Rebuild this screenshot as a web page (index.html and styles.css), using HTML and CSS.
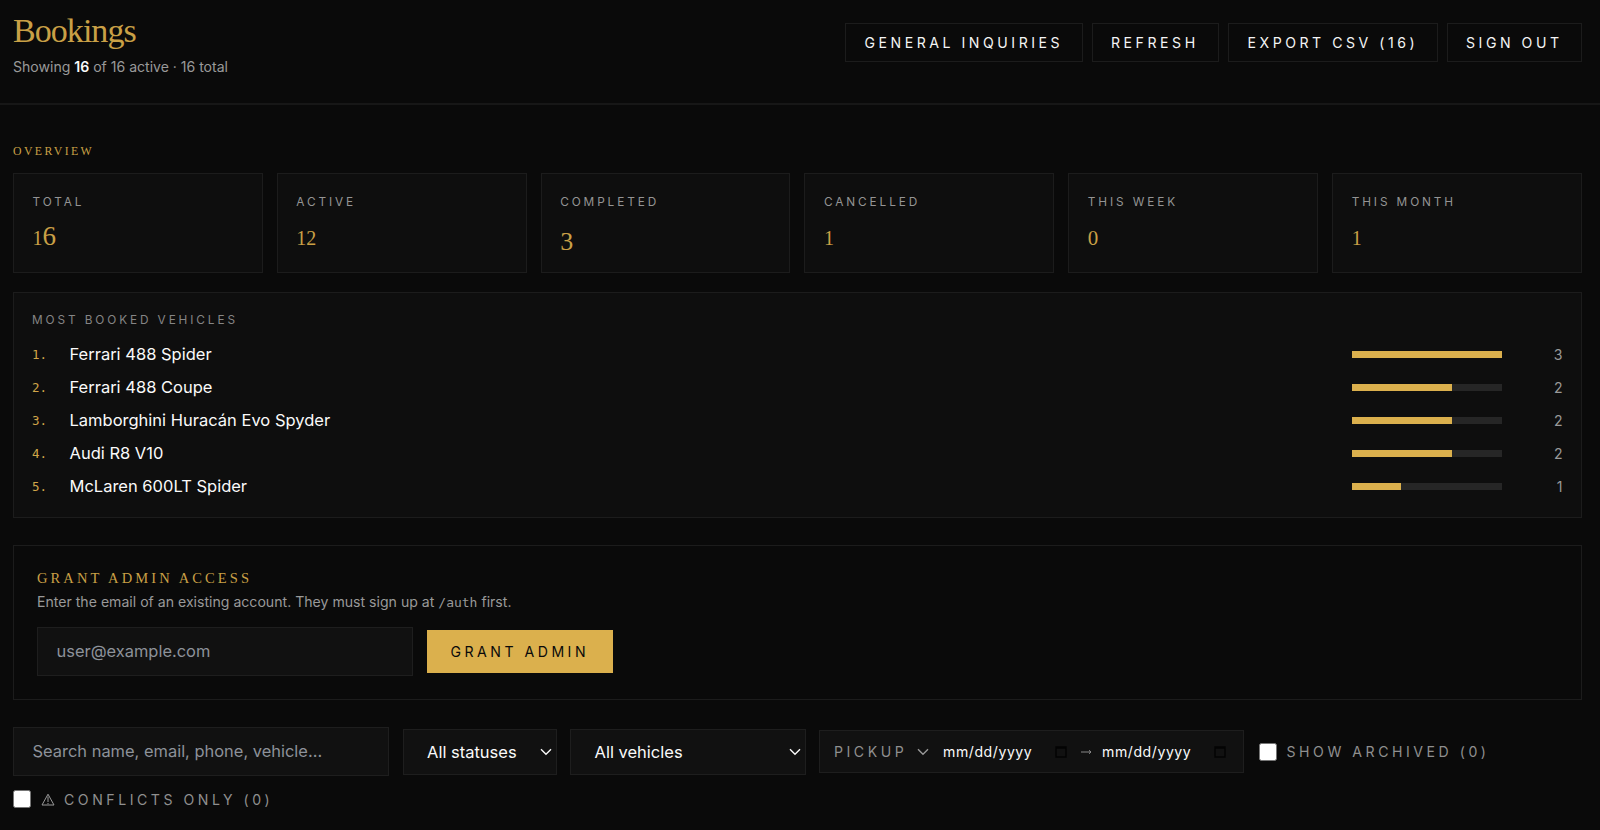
FILE: index.html
```html
<!DOCTYPE html>
<html lang="en">
<head>
<meta charset="utf-8">
<title>Bookings</title>
<link rel="stylesheet" href="styles.css">
</head>
<body>
<header class="topbar">
  <div class="heading">
    <h1 class="title">Bookings</h1>
    <p class="summary">Showing <b>16</b> of 16 active · 16 total</p>
  </div>
  <nav class="actions">
    <button class="btn btn-inquiries">GENERAL INQUIRIES</button>
    <button class="btn btn-refresh">REFRESH</button>
    <button class="btn btn-export">EXPORT CSV (16)</button>
    <button class="btn btn-signout">SIGN OUT</button>
  </nav>
</header>
<main class="content">
  <h2 class="overline">OVERVIEW</h2>
  <section class="stats">
    <div class="card"><div class="label">TOTAL</div><div class="value"><span class="short">1</span>6</div></div>
    <div class="card"><div class="label">ACTIVE</div><div class="value"><span class="short">12</span></div></div>
    <div class="card"><div class="label">COMPLETED</div><div class="value"><span class="low">3</span></div></div>
    <div class="card"><div class="label">CANCELLED</div><div class="value"><span class="short">1</span></div></div>
    <div class="card"><div class="label">THIS WEEK</div><div class="value"><span class="short zero">0</span></div></div>
    <div class="card"><div class="label">THIS MONTH</div><div class="value"><span class="short">1</span></div></div>
  </section>
  <section class="ranking">
    <div class="label ranking-label">MOST BOOKED VEHICLES</div>
    <div class="row"><span class="rank">1.</span><span class="name">Ferrari 488 Spider</span><span class="track"><span class="fill" style="width:100%"></span></span><span class="count">3</span></div>
    <div class="row"><span class="rank">2.</span><span class="name">Ferrari 488 Coupe</span><span class="track"><span class="fill" style="width:66.67%"></span></span><span class="count">2</span></div>
    <div class="row"><span class="rank">3.</span><span class="name">Lamborghini Huracán Evo Spyder</span><span class="track"><span class="fill" style="width:66.67%"></span></span><span class="count">2</span></div>
    <div class="row"><span class="rank">4.</span><span class="name">Audi R8 V10</span><span class="track"><span class="fill" style="width:66.67%"></span></span><span class="count">2</span></div>
    <div class="row"><span class="rank">5.</span><span class="name">McLaren 600LT Spider</span><span class="track"><span class="fill" style="width:33.33%"></span></span><span class="count">1</span></div>
  </section>
  <section class="grant">
    <h2 class="overline grant-title">GRANT ADMIN ACCESS</h2>
    <p class="hint">Enter the email of an existing account. They must sign up at <code>/auth</code> first.</p>
    <div class="grant-form">
      <input class="field" type="text" placeholder="user@example.com">
      <button class="primary">GRANT ADMIN</button>
    </div>
  </section>
  <section class="filters">
    <input class="field" type="text" placeholder="Search name, email, phone, vehicle...">
    <div class="select statuses"><span>All statuses</span><svg class="chev" viewBox="0 0 12 8"><path d="M1 1.2l5 5 5-5"/></svg></div>
    <div class="select vehicles"><span>All vehicles</span><svg class="chev" viewBox="0 0 12 8"><path d="M1 1.2l5 5 5-5"/></svg></div>
    <div class="range">
      <span class="range-label">PICKUP</span>
      <svg class="chev dim" viewBox="0 0 12 8"><path d="M1 1.2l5 5 5-5"/></svg>
      <span class="date">mm/dd/yyyy</span>
      <svg class="cal" viewBox="0 0 12 12"><path d="M1 1h10v10H1zM1 2.2h10"/></svg>
      <svg class="arrow" viewBox="0 0 12 8"><path d="M1 4h10M9 2.200L11 4 9 5.800"/></svg>
      <span class="date">mm/dd/yyyy</span>
      <svg class="cal" viewBox="0 0 12 12"><path d="M1 1h10v10H1zM1 2.200h10"/></svg>
    </div>
    <label class="check"><span class="box"></span><span class="check-text archived">SHOW ARCHIVED (0)</span></label>
    <label class="check conflicts"><span class="box"></span><svg class="warn" viewBox="0 0 14 13"><path d="M7 1.200L13 12H1zM7 3.500v5.500M7 10v1.200"/></svg><span class="check-text">CONFLICTS ONLY (0)</span></label>
  </section>
</main>
</body>
</html>
```
FILE: styles.css
```css
* { box-sizing: border-box; }
body {
  margin: 0;
  height: 830px;
  overflow: hidden;
  background: #0a0a0a;
  color: #fafafa;
  font-family: Inter, "Liberation Sans", sans-serif;
}
h1, h2, p { margin: 0; font-weight: 400; }
button, input { font-family: inherit; margin: 0; border-radius: 0; outline: 0; }

.topbar {
  display: flex;
  justify-content: space-between;
  height: 105px;
  padding: 11px 18px 0 13px;
  border-bottom: 2px solid #171717;
}
.title {
  font: 400 34px/40px "Liberation Serif", serif;
  letter-spacing: -.95px;
  color: #c9a046;
}
.summary { font-size: 14.1px; line-height: 20px; margin-top: 5.5px; color: #999; letter-spacing: -.02px; }
.summary b { color: #fafafa; font-weight: 600; }
.actions { display: flex; gap: 9px; padding-top: 12px; }
.btn {
  height: 39px;
  padding: 0 0 0 18.5px;
  border: 1px solid #1c1c1c;
  background: transparent;
  color: #f5f5f5;
  font-size: 14.1px;
  letter-spacing: 3.53px;
  text-align: left;
  white-space: nowrap;
}
.btn-inquiries { width: 237.5px; }
.btn-refresh { width: 127.5px; }
.btn-export { width: 209.5px; }
.btn-signout { width: 135.5px; }

.content { padding: 38px 18px 0 13px; }
.overline {
  font: 400 11.8px/16px "Liberation Serif", serif;
  letter-spacing: 2.4px;
  color: #c9a046;
}
.stats { display: grid; grid-template-columns: repeat(6, 1fr); gap: 14px; margin-top: 14px; }
.card { height: 100px; padding: 20px 18.5px; background: #0e0e0e; border: 1px solid #1c1c1c; }
.label { font-size: 11.8px; line-height: 16px; letter-spacing: 2.9px; color: #949494; }
.value { margin-top: 8px; font: 400 27px/36px "Liberation Serif", serif; color: #c9a046; height: 36px; }
.short { font-size: 20px; }
.zero { font-size: 21px; }
.low { display: inline-block; transform: translateY(5px); font-size: 26px; }

.ranking { height: 226px; margin-top: 19px; padding: 19px 18.5px 19px 18px; background: #0e0e0e; border: 1px solid #1c1c1c; }
.ranking-label { margin-bottom: 9.5px; color: #858585; }
.row { display: flex; align-items: center; height: 33px; }
.rank { width: 37.500px; font: 400 12.500px "DejaVu Sans Mono", monospace; color: #d0a549; }
.name { flex: 1; font-size: 16.500px; }
.track { width: 150px; height: 7px; background: #262626; }
.fill { display: block; height: 100%; background: #dbb04d; }
.count { width: 61px; text-align: right; font-size: 14.100px; color: #999; }

.grant { height: 154.5px; margin-top: 27px; padding: 24px 23px; border: 1px solid #1c1c1c; }
.grant-title { font-size: 14.500px; letter-spacing: 3.1px; }
.hint { margin-top: 6px; font-size: 14.100px; line-height: 20px; color: #999; white-space: nowrap; }
.hint code { font: 13px "DejaVu Sans Mono", monospace; }
.grant-form { display: flex; align-items: center; gap: 14px; margin-top: 15px; }
.field {
  width: 376px;
  height: 49px;
  padding: 0 18.500px 1px;
  border: 1px solid #1e1e1e;
  background: #111;
  color: #fafafa;
  font-size: 16.450px;
}
.field::placeholder { color: #8d929a; opacity: 1; }
.primary {
  width: 186px;
  height: 43px;
  padding: 0 0 1px 23.500px;
  border: 0;
  background: #dbb04d;
  color: #0a0a0a;
  font-size: 14.100px;
  letter-spacing: 3.500px;
  text-align: left;
  white-space: nowrap;
}

.filters { display: flex; flex-wrap: wrap; align-items: center; column-gap: 13.500px; row-gap: 13.500px; margin-top: 27.5px; }
.select {
  display: flex;
  align-items: center;
  justify-content: space-between;
  height: 46px;
  padding: 0 4px 0 23.500px;
  border: 1px solid #1e1e1e;
  background: #111;
  font-size: 16.500px;
}
.statuses { width: 154px; }
.vehicles { width: 235.5px; }
.chev { width: 12px; height: 8px; fill: none; stroke: #fafafa; stroke-width: 1.400; }
.dim { stroke: #999; margin-left: 8px; margin-right: 14px; }
.range { display: flex; align-items: center; width: 425px; height: 43px; padding-left: 14px; border: 1px solid #1e1e1e; background: #111; }
.range-label { font-size: 14.100px; letter-spacing: 3.530px; color: #8f8f8f; width: 75px; }
.date { width: 112px; font-size: 14.100px; letter-spacing: .55px; }
.cal { width: 12px; height: 12px; fill: none; stroke: #030303; stroke-width: 1.300; }
.arrow { width: 12px; height: 8px; fill: none; stroke: #888; margin: 0 10px 0 13px; }
.check { display: flex; align-items: center; height: 19px; margin-left: 1.500px; }
.conflicts { margin-left: 0; }
.box { width: 18px; height: 18px; background: #fff; border: 1px solid #767676; border-radius: 2.500px; margin-right: 9.500px; }
.check-text { font-size: 14.100px; letter-spacing: 3.530px; color: #8f8f8f; white-space: nowrap; }
.warn { width: 14px; height: 13px; margin-right: 9.500px; fill: none; stroke: #999; stroke-width: 1; }
```
